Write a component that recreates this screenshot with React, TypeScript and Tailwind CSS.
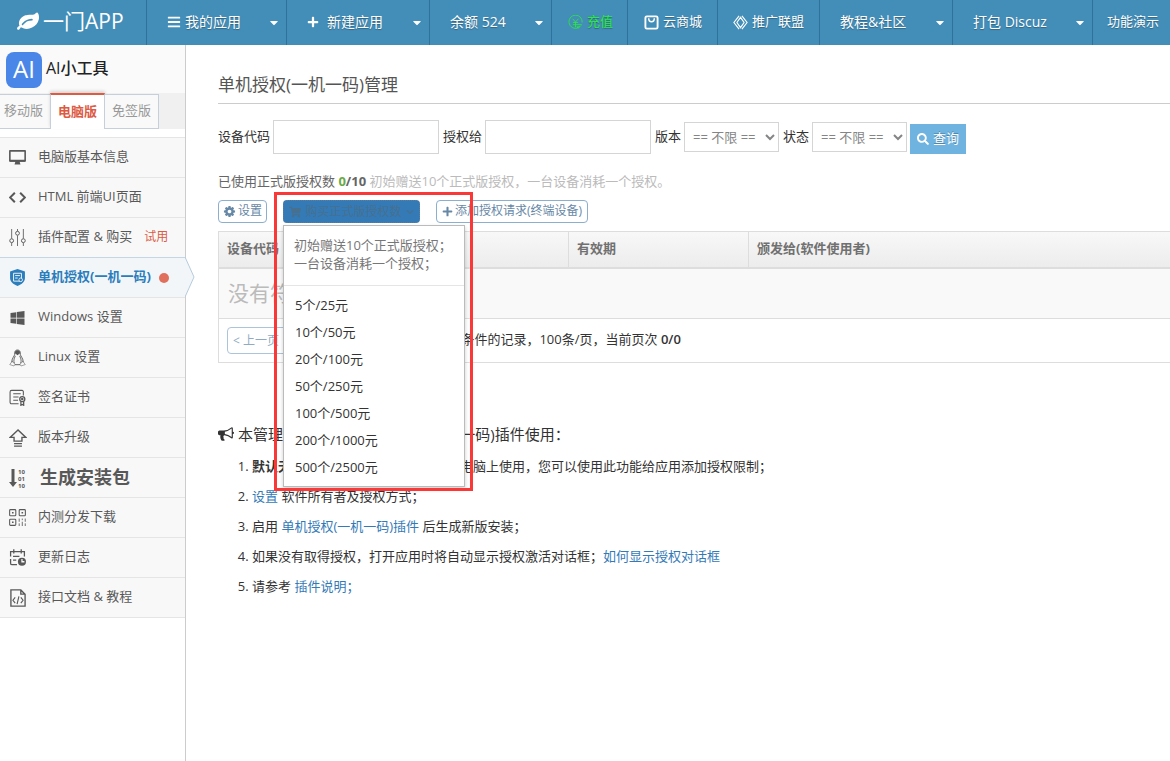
import React from 'react';
import { FaBars, FaCaretDown, FaChevronDown, FaPlus, FaSearch, FaShoppingCart, FaWindows } from 'react-icons/fa';

interface NavItem {
  label: string;
  width: string;
  icon?: React.ReactNode;
  caret?: boolean;
  className?: string;
}

interface MenuItem {
  label: string;
  icon: React.ReactNode;
  active?: boolean;
  large?: boolean;
  tag?: string;
}

const LeafIcon = () => (
  <svg viewBox="0 0 1792 1792" className="h-[22px] w-[22px]" fill="currentColor">
    <path d="M1280 704q0-26-19-45t-45-19q-172 0-318 49.5t-259.5 134-235.5 219.5q-19 21-19 45 0 26 19 45t45 19q24 0 45-19 27-24 74-71t67-66q137-124 268.5-176t313.5-52q26 0 45-19t19-45zm512-198q0 95-20 193-46 224-184.5 383t-357.5 268q-214 108-438 108-148 0-286-47-15-5-88-42t-96-37q-16 0-39.5 32t-45 70-52.5 70-60 32q-43 0-63.5-17.5t-45.5-59.5q-2-4-6-11t-5.5-10-3-9.5-1.5-13.5q0-35 31-73.5t68-65.5 68-56 31-48q0-4-14-38t-16-44q-9-51-9-104 0-115 43.5-220t119-184.5 170.5-139 204-95.5q55-18 145-25.5t179.5-9 178.5-6 163.5-24 113.5-56.5l29.5-29.5 29.5-28 27-20 36.5-16 43.5-4.5q39 0 70.5 46t47.5 112 24 124 8 96z" />
  </svg>
);

const CogIcon = () => (
  <svg viewBox="0 0 1792 1792" className="h-[13px] w-[13px]" fill="currentColor">
    <path d="M1152 896q0-106-75-181t-181-75-181 75-75 181 75 181 181 75 181-75 75-181zm512-109v222q0 12-8 23t-20 13l-185 28q-19 54-39 91 35 50 107 138 10 12 10 25t-9 23q-27 37-99 108t-94 71q-12 0-26-9l-138-108q-44 23-91 38-16 136-29 186-7 28-36 28h-222q-14 0-24.5-8.5t-11.5-21.5l-28-184q-49-16-90-37l-141 107q-10 9-25 9-14 0-25-11-126-114-165-168-7-10-7-23 0-12 8-23 15-21 51-66.5t54-70.5q-27-50-41-99l-183-27q-13-2-21-12.5t-8-23.5v-222q0-12 8-23t19-13l186-28q14-46 39-92-40-57-107-138-10-12-10-24 0-10 9-23 26-36 98.5-107.5t94.5-71.5q13 0 26 10l138 107q44-23 91-38 16-136 29-186 7-28 36-28h222q14 0 24.5 8.5t11.5 21.5l28 184q49 16 90 37l142-107q9-9 24-9 13 0 25 10 129 119 165 170 7 8 7 22 0 12-8 23-15 21-51 66.5t-54 70.5q26 50 41 98l183 28q13 2 21 12.5t8 23.5z" />
  </svg>
);

const BullhornIcon = () => (
  <svg viewBox="0 0 1792 1792" className="h-4 w-4" fill="currentColor">
    <path d="M1664 640q53 0 90.5 37.5t37.5 90.5-37.5 90.5-90.5 37.5v384q0 52-38 90t-90 38q-417-347-812-380-58 19-91 66t-31 100.5 40 92.5q-20 33-23 65.5t6 58 33.5 55 48 50 61.5 50.5q-29 58-111.5 83t-168.5 11.5-132-55.5q-7-23-29.5-87.5t-32-94.5-23-89-15-101 3.5-98.5 22-110.5h-122q-66 0-113-47t-47-113v-192q0-66 47-113t113-47h480q435 0 896-384 52 0 90 38t38 90v384zm-128 604v-954q-394 302-768 343v270q377 42 768 341z" />
  </svg>
);

const Svg = ({ children, className = 'h-4 w-4' }: { children: React.ReactNode; className?: string }) => (
  <svg viewBox="0 0 16 16" className={className} fill="none" stroke="currentColor" strokeWidth="1.2">
    {children}
  </svg>
);

const CoinIcon = () => (
  <Svg className="h-[15px] w-[15px]">
    <path d="M13.8 11.2A7 7 0 1 1 15 8" strokeWidth="0.9" />
    <path d="M5 4l3 3.5L11 4M8 7.5V13M5.2 8h5.6M5.2 10.3h9.6M12.5 12.6h-3l1.6 1.6" strokeWidth="0.9" />
  </Svg>
);

const BagIcon = () => (
  <Svg className="h-[15px] w-[15px]">
    <rect x="1.5" y="1.5" width="13" height="13" rx="1.5" strokeWidth="2" />
    <path d="M5 3.5c0 5 6 5 6 0" strokeWidth="1.6" />
  </Svg>
);

const AllianceIcon = () => (
  <Svg className="h-[15px] w-[15px]">
    <path d="M6.5 1L1 8l5.5 7M9.5 1L15 8l-5.5 7M8 2.5L4.2 8 8 13.5 11.8 8z" strokeWidth="1.2" />
  </Svg>
);

const MonitorIcon = () => (
  <Svg className="h-[17px] w-[17px]">
    <path d="M0.8 1.8h14.400v9.4H.8z" strokeWidth="1.5" strokeLinejoin="round" />
    <path d="M.8 10h14.400v2H.8zM6 12h4l.8 2.6H5.2z" fill="currentColor" stroke="none" />
  </Svg>
);

const CodeIcon = () => (
  <Svg className="h-[17px] w-[17px]">
    <path d="M5.5 3.5L1 8l4.5 4.5M10.5 3.5L15 8l-4.5 4.5" strokeWidth="1.9" />
  </Svg>
);

const SlidersIcon = () => (
  <Svg className="h-[17px] w-[17px]">
    <path d="M2.5 0v9M2.5 13v3M8 0v2M8 6v10M13.5 0v9M13.5 13v3" strokeWidth="0.8" />
    <circle cx="2.5" cy="11" r="1.8" strokeWidth="0.9" />
    <circle cx="8" cy="4" r="1.8" strokeWidth="0.9" />
    <circle cx="13.5" cy="11" r="1.8" strokeWidth="0.9" />
  </Svg>
);

const ShieldIcon = () => (
  <Svg className="h-[17px] w-[17px]">
    <path d="M8 0l7 2.3v6.2c0 3.5-3 6-7 7.5-4-1.5-7-4-7-7.5V2.3z" fill="currentColor" stroke="none" />
    <path d="M4.3 4h7.400v7.400H4.3zM5.800 6.2h4.5M5.800 8.5h2.4" stroke="#f2f6f9" strokeWidth="0.9" />
    <circle cx="11" cy="10.2" r="1.7" fill="currentColor" stroke="#f2f6f9" strokeWidth="0.8" />
  </Svg>
);

const PenguinIcon = () => (
  <Svg className="h-[18px] w-[17px]">
    <path d="M5.400 4.500C5 1.700 6.200.5 8 .5s3 1.200 2.600 4c.3 2 3 4 2.700 7.500M5.400 4.500c-.3 2-3 4-2.700 7.500M5.500 14.300h5" strokeWidth="0.900" />
    <path d="M5.600 3.600C5.600 1.500 6.500.8 8 .8s2.400.7 2.400 2.800L8 5.400z" fill="currentColor" stroke="none" />
    <path d="M6 6c-1.500 3-1.900 5-.8 7M10 6c1.500 3 1.900 5 .8 7" strokeWidth="0.800" />
    <path d="M3 11l-2.300 3.200 4 1.300 1-1.500zM13 11l2.300 3.200-4 1.300-1-1.500z" strokeWidth="0.500" strokeLinejoin="round" />
  </Svg>
);

const CertificateIcon = () => (
  <Svg className="h-[17px] w-[17px]">
    <path d="M13.500 6V2.500A1.200 1.200 0 0 0 12.300 1.300H2.500A1.500 1.500 0 0 0 1 2.800v9.700a1.400 1.400 0 0 0 1.400 1.400H9" strokeWidth="1" />
    <path d="M4 4.500h7M4 7.500h5M4 10.500h4.500" strokeWidth="1" />
    <circle cx="12.500" cy="9.500" r="2.400" />
    <circle cx="12.500" cy="9.500" r="0.600" />
    <path d="M11.200 12v3.300l1.300-.8 1.300.8V12" />
  </Svg>
);

const UpgradeIcon = () => (
  <Svg className="h-[18px] w-[18px]">
    <path d="M8 .8L1 7.500h3.500v3.300h7V7.500H15zM4.500 13h7M4.500 15.200h7" strokeWidth="1.200" />
  </Svg>
);

const BuildIcon = () => (
  <svg viewBox="0 0 20 24" className="h-6 w-5" fill="currentColor">
    <path d="M2.500 3h3v13H8l-4 5-4-5h2.500z" />
    <text x="9" y="8" className="text-[6px] font-bold">10</text>
    <text x="9" y="15" className="text-[6px] font-bold">01</text>
    <text x="9" y="22" className="text-[6px] font-bold">10</text>
  </svg>
);

const QrIcon = () => (
  <Svg className="h-[17px] w-[17px]">
    <rect x="0.600" y="0.600" width="5.800" height="5.800" rx="0.800" strokeWidth="1" />
    <rect x="9.600" y="0.600" width="5.800" height="5.800" rx="0.800" strokeWidth="1" />
    <rect x="0.600" y="9.600" width="5.800" height="5.800" rx="0.800" strokeWidth="1" />
    <path d="M2.800 3.500h1.500M11.800 3.500h1.500M2.800 12.500h1.500" strokeWidth="1.500" />
    <path d="M9.600 9v3M9.600 13.500V16M12.500 9v1.500M12.500 12v4M15.300 9v3M15.300 13.500V16" strokeWidth="0.800" />
  </Svg>
);

const LogIcon = () => (
  <Svg className="h-[17px] w-[17px]">
    <path d="M7.500 14.800H3A1.500 1.500 0 0 1 1.500 13.300V9.500M1.500 7V2.500h13V7M4.500.3v4M11.500.3v4M3.800 7h6M3.800 10.500h3" />
    <circle cx="12.200" cy="12" r="3.800" fill="currentColor" stroke="none" />
    <path d="M12.200 9.500V12h2.300" stroke="#f8f8f8" />
  </Svg>
);

const DocIcon = () => (
  <Svg className="h-[18px] w-[18px]">
    <path d="M10.500.8H1.700v14.400h12.600V4.600zM10.500.8v3.800h3.800" />
    <path d="M5.500 7.500L3.500 10l2 2.500M10.500 7.500l2 2.500-2 2.500M8.800 6.500l-1.600 7" strokeWidth="1" />
  </Svg>
);

const navItems: NavItem[] = [
  { label: '我的应用', width: 'w-[140px] pl-5 text-sm gap-1', icon: <FaBars />, caret: true },
  { label: '新建应用', width: 'w-[143px] pl-5 text-sm gap-2', icon: <FaPlus className="h-3 w-3" />, caret: true },
  { label: '余额 524', width: 'w-[122px] pl-5 text-sm', caret: true },
  { label: '充值', width: 'w-[76px] pl-4 text-[13px] gap-1', icon: <CoinIcon />, className: 'text-[#2bea3c]' },
  { label: '云商城', width: 'w-[90px] pl-4 text-[13px] gap-1', icon: <BagIcon /> },
  { label: '推广联盟', width: 'w-[102px] pl-[15px] text-[13px] gap-1', icon: <AllianceIcon /> },
  { label: '教程&社区', width: 'w-[133px] pl-5 text-sm', caret: true },
  { label: '打包 Discuz', width: 'w-[140px] pl-5 text-sm', caret: true },
  { label: '功能演示', width: 'w-[84px] pl-[14px] text-[13px]' },
];

const menuItems: MenuItem[] = [
  { label: '电脑版基本信息', icon: <MonitorIcon /> },
  { label: 'HTML 前端UI页面', icon: <CodeIcon /> },
  { label: '插件配置 & 购买', icon: <SlidersIcon />, tag: '试用' },
  { label: '单机授权(一机一码)', icon: <ShieldIcon />, active: true },
  { label: 'Windows 设置', icon: <FaWindows className="h-4 w-[17px]" /> },
  { label: 'Linux 设置', icon: <PenguinIcon /> },
  { label: '签名证书', icon: <CertificateIcon /> },
  { label: '版本升级', icon: <UpgradeIcon /> },
  { label: '生成安装包', icon: <BuildIcon />, large: true },
  { label: '内测分发下载', icon: <QrIcon /> },
  { label: '更新日志', icon: <LogIcon /> },
  { label: '接口文档 & 教程', icon: <DocIcon /> },
];

const packages = ['5个/25元', '10个/50元', '20个/100元', '50个/250元', '100个/500元', '200个/1000元', '500个/2500元'];

const TopNav: React.FC = () => (
  <header className="flex h-[45px] overflow-hidden bg-[#438eb9] pb-px text-white">
    <a href="#" className="flex w-[146px] shrink-0 items-center gap-1 pl-[17px] text-[21px]">
      <LeafIcon />
      一门APP
    </a>
    <nav className="-mb-px flex">
      {navItems.map((item) => (
        <a
          key={item.label}
          href="#"
          className={`flex shrink-0 items-center whitespace-nowrap border-l border-[#2f739b] pb-px pr-2 [text-shadow:0_1px_1px_rgba(0,0,0,0.3)] ${item.width} ${item.className ?? ''}`}
        >
          {item.icon}
          {item.label}
          {item.caret && <FaCaretDown className="ml-auto h-[13px] w-2" preserveAspectRatio="none" />}
        </a>
      ))}
    </nav>
  </header>
);

const Sidebar: React.FC = () => (
  <aside className="w-[186px] shrink-0 border-r border-[#ccc]">
    <div className="flex h-12 items-center gap-1 bg-[#fafafa] pl-[6px] text-base text-[#222]">
      <span className="mt-[2px] flex h-9 w-9 items-center justify-center rounded-lg bg-[#4a86e8] pb-[2px] text-2xl text-white">
        AI
      </span>
      <span className="pb-[2px] font-medium">AI小工具</span>
    </div>
    <div className="flex h-9 items-start bg-[#f0f0f0] text-[13px] text-[#999]">
      <button className="mt-px h-[35px] w-[50px] border-y border-[#c5d0dc] bg-[#f9f9f9] pb-px pr-[3px]">移动版</button>
      <button className="h-9 w-[55px] border-x border-t-2 border-x-[#c5d0dc] border-t-[#dd5a43] bg-white font-bold text-[#dd5a43] shadow-[0_-2px_3px_rgba(0,0,0,0.15)]">
        电脑版
      </button>
      <button className="mt-px h-[35px] w-[54px] border-y border-r border-[#c5d0dc] bg-[#f9f9f9] pb-px">免签版</button>
    </div>
    <ul className="mt-2 border-b border-[#e5e5e5]">
      {menuItems.map((item) => (
        <li key={item.label} className="relative">
          <a
            href="#"
            className={`flex h-10 items-center whitespace-nowrap border-t text-[13px] ${
              item.active
                ? 'border-[#c5d7e4] bg-[#f2f6f9] font-bold text-[#2b7dbc]'
                : 'border-[#e5e5e5] bg-[#f8f8f8] text-[#585858]'
            }`}
          >
            <span className="flex w-[38px] shrink-0 pl-[9px]">{item.icon}</span>
            <span className={item.large ? 'pb-[2px] pl-[2px] text-lg font-bold' : 'pb-[2px]'}>{item.label}</span>
            {item.tag && <span className="ml-3 pb-[2px] text-[12px] text-[#dd5a43]">{item.tag}</span>}
            {item.active && <span className="ml-2 h-[10px] w-[10px] rounded-full bg-[#e0705c]" />}
          </a>
          {item.active && (
            <svg viewBox="0 0 10 40" className="absolute -right-[10px] top-0 h-10 w-[10px]">
              <path d="M0 0L9 20L0 40" fill="#f2f6f9" stroke="#b5cbdc" />
            </svg>
          )}
        </li>
      ))}
    </ul>
  </aside>
);

const SearchForm: React.FC = () => (
  <form className="mt-4 flex h-[34px] items-center gap-1 whitespace-nowrap text-[#333]">
    <div className="flex items-center gap-[3px]">
      <label htmlFor="code">设备代码</label>
      <input id="code" type="text" className="h-[34px] w-[166px] border border-[#d5d5d5] px-1 outline-none" />
    </div>
    <div className="flex items-center gap-[3px]">
      <label htmlFor="owner">授权给</label>
      <input id="owner" type="text" className="h-[34px] w-[166px] border border-[#d5d5d5] px-1 outline-none" />
    </div>
    <div className="flex items-center gap-[3px]">
      <label htmlFor="edition">版本</label>
      <select id="edition" className="h-[30px] w-[95px] border border-[#d5d5d5] bg-white px-1 text-[#858585]">
        <option>== 不限 ==</option>
      </select>
    </div>
    <div className="flex items-center gap-[3px]">
      <label htmlFor="state">状态</label>
      <select id="state" className="h-[30px] w-[95px] border border-[#d5d5d5] bg-white px-1 text-[#858585]">
        <option>== 不限 ==</option>
      </select>
      <button
        type="button"
        className="mt-1 flex h-[30px] w-14 items-center justify-center gap-1 bg-[#6fb3e0] text-white [text-shadow:0_-1px_0_rgba(0,0,0,0.25)]"
      >
        <FaSearch className="h-3 w-3" />
        查询
      </button>
    </div>
  </form>
);

const PurchaseMenu: React.FC = () => (
  <div className="relative">
    <button className="flex h-[23px] w-[137px] items-center justify-center gap-1 rounded border border-dotted border-[#5a7f9f] bg-[#337ab7] text-[12px] text-[#47708f]">
      <FaShoppingCart className="h-3 w-3" />
      购买正式版授权数
      <FaChevronDown className="h-2 w-2" />
    </button>
    <div className="absolute left-0 top-[25px] z-10 h-[262px] w-[182px] border border-[#bbb] bg-white text-[13px] shadow-[0_2px_4px_rgba(0,0,0,0.2)]">
      <p className="h-[60px] whitespace-nowrap border-b border-[#e5e5e5] pl-[10px] pt-[10px] leading-[18px] text-[#777]">
        初始赠送10个正式版授权；
        <br />
        一台设备消耗一个授权；
      </p>
      <ul className="pt-[6px]">
        {packages.map((item) => (
          <li key={item}>
            <a href="#" className="block h-[27px] pl-[11px] leading-[27px] text-[#333]">
              {item}
            </a>
          </li>
        ))}
      </ul>
    </div>
    <div className="pointer-events-none absolute -left-[9px] -top-2 z-20 h-[299px] w-[199px] border-[3px] border-[#fb3838]" />
  </div>
);

const LicenseTable: React.FC = () => (
  <table className="mt-2 w-full table-fixed border-collapse whitespace-nowrap text-left text-[#333]">
    <thead>
      <tr className="h-9 bg-linear-to-b from-[#f8f8f8] to-[#ececec] text-[#707070]">
        <th className="w-[350px] border border-b-2 border-[#ddd] px-2 pb-[2px]">设备代码</th>
        <th className="w-[180px] border border-b-2 border-[#ddd] px-2 pb-[2px]">有效期</th>
        <th className="border border-b-2 border-r-0 border-[#ddd] px-2 pb-[2px]">颁发给(软件使用者)</th>
      </tr>
    </thead>
    <tbody>
      <tr className="h-[51px] bg-[#f9f9f9]">
        <td colSpan={3} className="border border-r-0 border-[#ddd] px-[9px] text-[21px] text-[#bbb]">
          没有符合条件的记录
        </td>
      </tr>
      <tr className="h-11">
        <td colSpan={3} className="border border-r-0 border-[#ddd] px-2">
          <div className="flex items-center">
            <button className="h-[27px] w-[62px] rounded border border-[#abc4d9] pr-1 text-[12px] text-[#8fabc3]">&lt; 上一页</button>
            <button className="ml-1 h-[27px] w-[62px] rounded border border-[#abc4d9] text-[12px] text-[#8fabc3]">下一页 &gt;</button>
            <span className="ml-[47px] pb-[2px]">
              共0条符合条件的记录，100条/页，当前页次 <b className="font-semibold">0/0</b>
            </span>
          </div>
        </td>
      </tr>
    </tbody>
  </table>
);

const UsageNotes: React.FC = () => (
  <section className="mt-[59px] whitespace-nowrap text-[#333]">
    <h2 className="flex h-6 items-center gap-1 text-[15px]">
      <BullhornIcon />
      本管理页需要配合 单机授权 (一机一码)插件使用：
    </h2>
    <ol className="ml-[34px] mt-[5px] list-decimal leading-[30px]">
      <li>
        <b>默认无限制</b>，安装包可以在任意多台电脑上使用，您可以使用此功能给应用添加授权限制；
      </li>
      <li>
        <a href="#" className="text-[#337ab7]">设置</a> 软件所有者及授权方式；
      </li>
      <li>
        启用 <a href="#" className="text-[#337ab7]">单机授权(一机一码)插件</a> 后生成新版安装；
      </li>
      <li>
        如果没有取得授权，打开应用时将自动显示授权激活对话框；
        <a href="#" className="text-[#337ab7]">如何显示授权对话框</a>
      </li>
      <li>
        请参考 <a href="#" className="text-[#337ab7]">插件说明；</a>
      </li>
    </ol>
  </section>
);

const App: React.FC = () => {
  return (
    <div
      lang="zh-CN"
      className="flex min-h-screen flex-col overflow-x-hidden bg-white font-['Open_Sans','Noto_Sans_CJK_SC',sans-serif] text-[13px]"
    >
      <TopNav />
      <div className="flex flex-1">
        <Sidebar />
        <main className="min-w-0 flex-1 pl-8">
          <h1 className="h-[59px] border-b border-[#ccc] pt-[27px] text-[17px] leading-[26px] text-[#555]">
            单机授权(一机一码)管理
          </h1>
          <SearchForm />
          <p className="mt-[18px] leading-[18px] text-[#666]">
            已使用正式版授权数 <b><span className="text-[#69aa46]">0</span>/10</b>{' '}
            <span className="text-[#bbb]">初始赠送10个正式版授权，一台设备消耗一个授权。</span>
          </p>
          <div className="mt-[10px] flex gap-4 whitespace-nowrap text-[12px] text-[#6688a6]">
            <button className="flex h-[23px] w-[49px] items-center justify-center gap-[2px] rounded border border-[#8bafce] bg-white pb-px">
              <CogIcon />
              设置
            </button>
            <PurchaseMenu />
            <button className="flex h-[23px] w-[152px] items-center justify-center gap-[2px] rounded border border-[#8bafce] bg-white pb-px">
              <FaPlus className="h-[11px] w-[11px]" />
              添加授权请求(终端设备)
            </button>
          </div>
          <LicenseTable />
          <UsageNotes />
        </main>
      </div>
    </div>
  );
};

export default App;
